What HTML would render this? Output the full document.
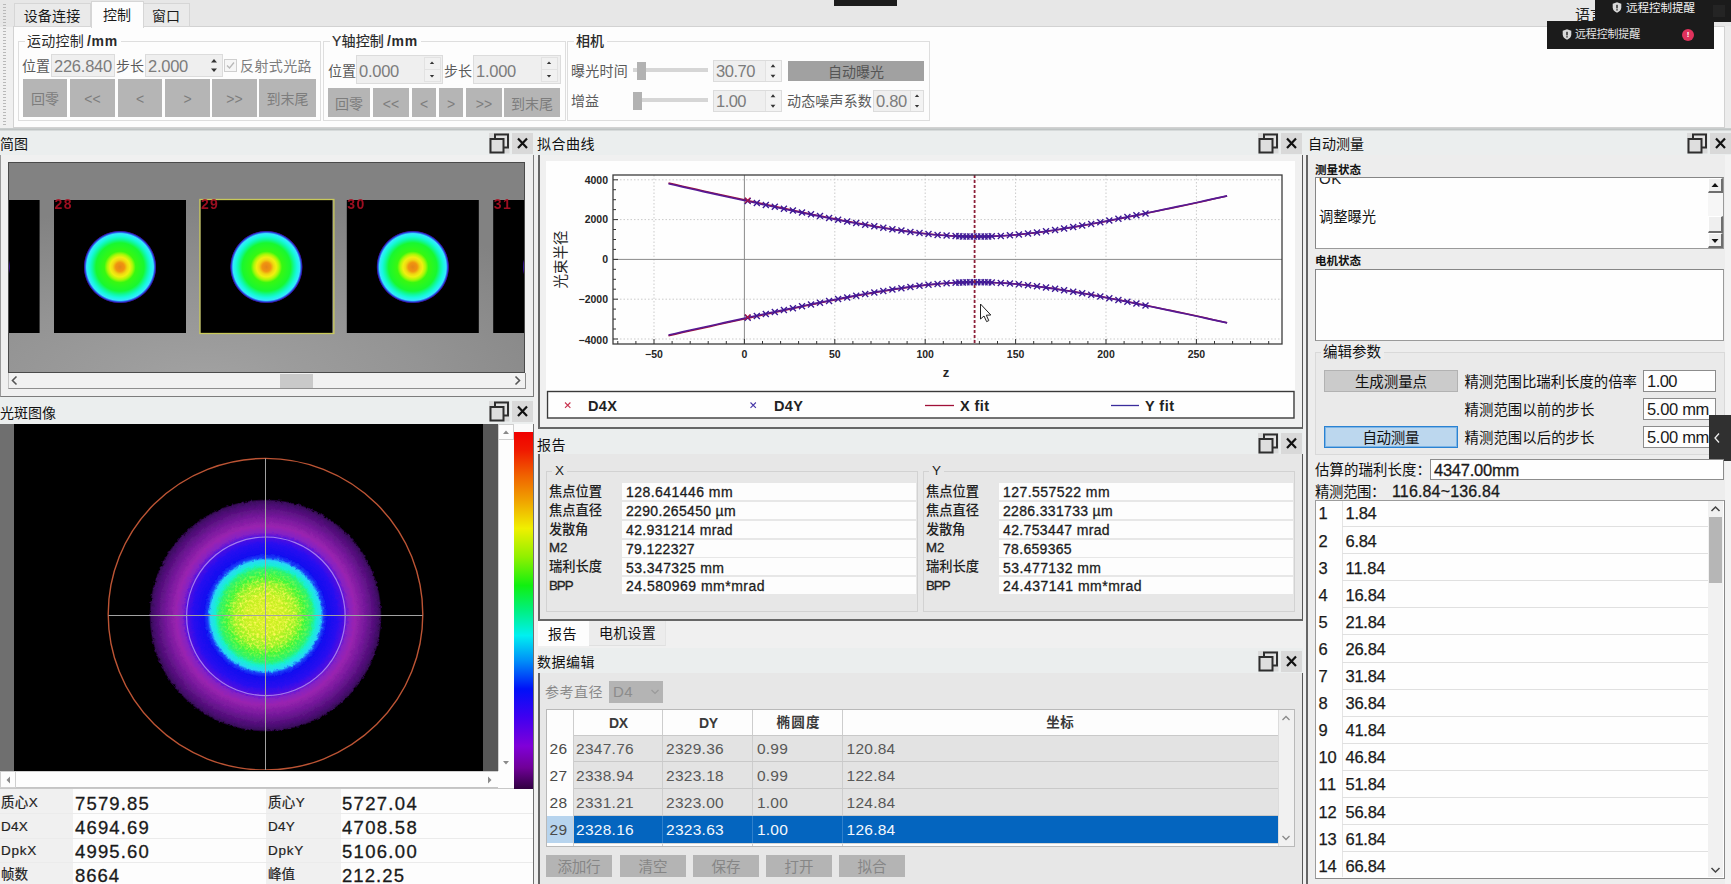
<!DOCTYPE html>
<html lang="zh-CN"><head><meta charset="utf-8"><title>光束质量分析</title>
<style>
html,body{margin:0;padding:0}
body{width:1731px;height:884px;overflow:hidden;position:relative;background:#f0f0f0;font-family:"Liberation Sans","Noto Sans CJK SC",sans-serif;font-size:14px}
div{position:absolute;box-sizing:border-box}
svg{position:absolute;overflow:hidden}
.t{position:absolute;white-space:pre;display:block}
</style></head>
<body>
<div style="left:0px;top:155px;width:534px;height:242px;background:#f0f0f0;border-left:1px solid #9a9a9a;border-right:1px solid #7c7c7c;border-bottom:1px solid #7c7c7c"></div>
<svg style="left:8px;top:162px" width="517" height="211" viewBox="0 0 517 211"><defs><radialGradient id="tg" cx="0.38" cy="1.05" r="0.85"><stop offset="0" stop-color="#a2a2a2"/><stop offset="0.5" stop-color="#949494"/><stop offset="1" stop-color="#828282"/></radialGradient><radialGradient id="sp" cx="0.5" cy="0.5" r="0.5"><stop offset="0" stop-color="#e48418"/><stop offset="0.12" stop-color="#f09410"/><stop offset="0.2" stop-color="#f0d810"/><stop offset="0.27" stop-color="#f0f010"/><stop offset="0.35" stop-color="#a8f808"/><stop offset="0.43" stop-color="#38f810"/><stop offset="0.66" stop-color="#18f830"/><stop offset="0.76" stop-color="#10f8a0"/><stop offset="0.84" stop-color="#18f8e0"/><stop offset="0.915" stop-color="#38e8ff"/><stop offset="0.955" stop-color="#2848e0"/><stop offset="0.985" stop-color="#300878"/><stop offset="1" stop-color="#000"/></radialGradient></defs><rect width="517" height="211" fill="url(#tg)"/><rect x="0.5" y="0.5" width="516" height="210" fill="none" stroke="#4a4a4a"/><rect x="-100.4" y="38" width="132" height="133" fill="#000"/><circle cx="-34.4" cy="105" r="36.5" fill="url(#sp)"/><text x="-99.9" y="47" font-size="14" fill="#ac1024" font-family="Liberation Sans,sans-serif" font-weight="700" opacity="0.9" textLength="17">27</text><rect x="46.0" y="38" width="132" height="133" fill="#000"/><circle cx="112.0" cy="105" r="36.5" fill="url(#sp)"/><text x="46.5" y="47" font-size="14" fill="#ac1024" font-family="Liberation Sans,sans-serif" font-weight="700" opacity="0.9" textLength="17">28</text><rect x="192.4" y="38" width="132" height="133" fill="#000"/><circle cx="258.4" cy="105" r="36.5" fill="url(#sp)"/><rect x="191.9" y="37.5" width="134" height="134" fill="none" stroke="#c9c95a" stroke-width="1.3"/><text x="192.9" y="47" font-size="14" fill="#ac1024" font-family="Liberation Sans,sans-serif" font-weight="700" opacity="0.9" textLength="17">29</text><rect x="338.8" y="38" width="132" height="133" fill="#000"/><circle cx="404.8" cy="105" r="36.5" fill="url(#sp)"/><text x="339.3" y="47" font-size="14" fill="#ac1024" font-family="Liberation Sans,sans-serif" font-weight="700" opacity="0.9" textLength="17">30</text><rect x="485.2" y="38" width="132" height="133" fill="#000"/><circle cx="551.2" cy="105" r="36.5" fill="url(#sp)"/><text x="485.7" y="47" font-size="14" fill="#ac1024" font-family="Liberation Sans,sans-serif" font-weight="700" opacity="0.9" textLength="17">31</text><rect x="0.5" y="0.5" width="516" height="210" fill="none" stroke="#4a4a4a"/></svg>
<div style="left:8px;top:373px;width:518px;height:16px;background:#f1f1f1;border-left:1px solid #c4c4c4;border-right:1px solid #8e8e8e;border-bottom:1px solid #8e8e8e"></div>
<div style="left:280px;top:374px;width:33px;height:14px;background:#c9c9c9;"></div>
<svg style="left:10px;top:375px" width="10" height="11"><path d="M6.5 1.5 L2.5 5.5 L6.5 9.5" stroke="#555" stroke-width="1.6" fill="none"/></svg>
<svg style="left:512px;top:375px" width="10" height="11"><path d="M3.5 1.5 L7.5 5.5 L3.5 9.5" stroke="#555" stroke-width="1.6" fill="none"/></svg>
<div style="left:0px;top:397px;width:533px;height:27px;background:#ebeeee;"></div>
<span class="t" style="top:402.5px;height:21px;line-height:21px;font-size:14px;color:#111;letter-spacing:0.00px;left:0px;">光斑图像</span>
<svg style="left:489px;top:401px" width="44" height="21"><rect x="0" y="0" width="20.5" height="20.5" fill="#dadada"/><rect x="6" y="1.5" width="13" height="13" fill="#e2e2e2" stroke="#2e2e2e" stroke-width="2"/><rect x="1.5" y="6" width="13" height="13.5" fill="#dedede" stroke="#2e2e2e" stroke-width="2"/><rect x="23" y="0" width="21" height="21" fill="#d9d9d9"/><path d="M29 5.5 L38 15 M38 5.5 L29 15" stroke="#111" stroke-width="2.2" fill="none"/></svg>
<div style="left:0px;top:424px;width:498px;height:347px;background:#000;"></div>
<div style="left:0px;top:424px;width:14px;height:347px;background:#6f6f6f;"></div>
<div style="left:483px;top:424px;width:15px;height:347px;background:#575757;"></div>
<svg style="left:14px;top:424px" width="469" height="346" viewBox="0 0 469 346"><defs><radialGradient id="bm" cx="0.5" cy="0.5" r="0.5"><stop offset="0" stop-color="#d6f020"/><stop offset="0.17" stop-color="#c4f020"/><stop offset="0.27" stop-color="#90f428"/><stop offset="0.33" stop-color="#40f838"/><stop offset="0.40" stop-color="#28f470"/><stop offset="0.435" stop-color="#18f0d0"/><stop offset="0.475" stop-color="#28d8f8"/><stop offset="0.5" stop-color="#1840f8"/><stop offset="0.53" stop-color="#1010f0"/><stop offset="0.62" stop-color="#2808f0"/><stop offset="0.68" stop-color="#5010e0"/><stop offset="0.715" stop-color="#8420c4"/><stop offset="0.77" stop-color="#9a24b0"/><stop offset="0.86" stop-color="#74189a"/><stop offset="0.96" stop-color="#480c70"/><stop offset="0.985" stop-color="#3a0a5c"/><stop offset="1" stop-color="#180228"/></radialGradient><radialGradient id="cm" cx="0.5" cy="0.5" r="0.5"><stop offset="0" stop-color="#fff"/><stop offset="0.55" stop-color="#fff"/><stop offset="1" stop-color="#000"/></radialGradient><mask id="cmk"><circle cx="251.5" cy="191.5" r="50" fill="url(#cm)"/></mask><filter id="nz" x="0" y="0" width="1" height="1"><feTurbulence type="fractalNoise" baseFrequency="0.42" numOctaves="2" seed="7"/><feColorMatrix type="matrix" values="0 0 0 0 0.97  0 0 0 0 0.94  0 0 0 0 0.1  2.6 0 0 0 -1.05"/></filter><filter id="rg" x="-0.05" y="-0.05" width="1.1" height="1.1"><feTurbulence type="fractalNoise" baseFrequency="0.3" numOctaves="2" seed="11" result="n"/><feDisplacementMap in="SourceGraphic" in2="n" scale="3.2" xChannelSelector="R" yChannelSelector="G"/></filter></defs><circle cx="251.5" cy="191.5" r="116" fill="url(#bm)" filter="url(#rg)"/><rect x="199.5" y="139.5" width="104" height="104" filter="url(#nz)" mask="url(#cmk)"/><circle cx="251.9" cy="192.3" r="79.3" fill="none" stroke="#a47cee" stroke-width="1.2"/><ellipse cx="251.5" cy="190.2" rx="157.3" ry="155.8" fill="none" stroke="#bc5434" stroke-width="1.4"/><path d="M94.5 191.5 H408.5 M251.5 34.5 V346" stroke="#a2a2a2" stroke-width="1" fill="none"/></svg>
<div style="left:498px;top:424px;width:16px;height:347px;background:#fdfdfd;border-left:1px solid #d0d0d0"></div>
<div style="left:498px;top:424px;width:16px;height:16px;background:#fdfdfd;border:1px solid #cfcfcf;"></div>
<svg style="left:501px;top:429px" width="10" height="6"><path d="M2 5 L5 1.5 L8 5Z" fill="#8a8a8a"/></svg>
<svg style="left:501px;top:760px" width="10" height="6"><path d="M2 1 L5 4.5 L8 1Z" fill="#8a8a8a"/></svg>
<div style="left:0px;top:771px;width:498px;height:17px;background:#fdfdfd;border-top:1px solid #cfcfcf;border-bottom:1px solid #c4c4c4"></div>
<div style="left:0px;top:771px;width:16px;height:17px;background:#fdfdfd;border:1px solid #cfcfcf;"></div>
<svg style="left:5px;top:775px" width="6" height="10"><path d="M5 1.5 L1.5 5 L5 8.5Z" fill="#8a8a8a"/></svg>
<svg style="left:487px;top:775px" width="6" height="10"><path d="M1 1.5 L4.5 5 L1 8.5Z" fill="#8a8a8a"/></svg>
<div style="left:514px;top:424px;width:20px;height:9px;background:#fafafa;"></div>
<div style="left:514px;top:432px;width:20px;height:357px;background:linear-gradient(#f00000 0%,#f01800 5%,#f06000 12%,#f0a000 19%,#f0f000 27%,#90f000 35%,#10f010 43%,#00f080 50%,#00f0f0 57%,#0090f8 64%,#0010f8 72%,#4000f0 80%,#8000d8 88%,#700098 94%,#300040 100%);border-right:1px solid #666"></div>
<div style="left:0px;top:789px;width:533px;height:95px;background:#fdfdfd;"></div>
<div style="left:0px;top:789px;width:73px;height:95px;background:#f0f0f0;"></div>
<div style="left:266px;top:789px;width:75px;height:95px;background:#f0f0f0;"></div>
<div style="left:0px;top:788px;width:514px;height:1px;background:#c8c8c8;"></div>
<div style="left:498px;top:771px;width:16px;height:17px;background:#fdfdfd;"></div>
<div style="left:533px;top:424px;width:1px;height:460px;background:#707070;"></div>
<div style="left:0px;top:813px;width:533px;height:1px;background:#ebebeb;"></div>
<div style="left:0px;top:838px;width:533px;height:1px;background:#ebebeb;"></div>
<div style="left:0px;top:862px;width:533px;height:1px;background:#ebebeb;"></div>
<span class="t" style="top:793.4px;height:20px;line-height:20px;font-size:13.5px;color:#222;letter-spacing:0.33px;left:1px;-webkit-text-stroke:0.2px #222;">质心X</span>
<span class="t" style="top:789.5px;height:28px;line-height:28px;font-size:18.5px;color:#1a1a1a;letter-spacing:1.16px;left:75px;-webkit-text-stroke:0.3px #1a1a1a;">7579.85</span>
<span class="t" style="top:793.4px;height:20px;line-height:20px;font-size:13.5px;color:#222;letter-spacing:0.33px;left:268px;-webkit-text-stroke:0.2px #222;">质心Y</span>
<span class="t" style="top:789.5px;height:28px;line-height:28px;font-size:18.5px;color:#1a1a1a;letter-spacing:1.30px;left:342px;-webkit-text-stroke:0.3px #1a1a1a;">5727.04</span>
<span class="t" style="top:817.4px;height:20px;line-height:20px;font-size:13.5px;color:#222;letter-spacing:0.24px;left:1px;-webkit-text-stroke:0.2px #222;">D4X</span>
<span class="t" style="top:813.5px;height:28px;line-height:28px;font-size:18.5px;color:#1a1a1a;letter-spacing:1.16px;left:75px;-webkit-text-stroke:0.3px #1a1a1a;">4694.69</span>
<span class="t" style="top:817.4px;height:20px;line-height:20px;font-size:13.5px;color:#222;letter-spacing:0.24px;left:268px;-webkit-text-stroke:0.2px #222;">D4Y</span>
<span class="t" style="top:813.5px;height:28px;line-height:28px;font-size:18.5px;color:#1a1a1a;letter-spacing:1.30px;left:342px;-webkit-text-stroke:0.3px #1a1a1a;">4708.58</span>
<span class="t" style="top:841.4px;height:20px;line-height:20px;font-size:13.5px;color:#222;letter-spacing:0.75px;left:1px;-webkit-text-stroke:0.2px #222;">DpkX</span>
<span class="t" style="top:837.5px;height:28px;line-height:28px;font-size:18.5px;color:#1a1a1a;letter-spacing:1.16px;left:75px;-webkit-text-stroke:0.3px #1a1a1a;">4995.60</span>
<span class="t" style="top:841.4px;height:20px;line-height:20px;font-size:13.5px;color:#222;letter-spacing:0.75px;left:268px;-webkit-text-stroke:0.2px #222;">DpkY</span>
<span class="t" style="top:837.5px;height:28px;line-height:28px;font-size:18.5px;color:#1a1a1a;letter-spacing:1.30px;left:342px;-webkit-text-stroke:0.3px #1a1a1a;">5106.00</span>
<span class="t" style="top:865.4px;height:20px;line-height:20px;font-size:13.5px;color:#222;letter-spacing:0.00px;left:1px;-webkit-text-stroke:0.2px #222;">帧数</span>
<span class="t" style="top:861.5px;height:28px;line-height:28px;font-size:18.5px;color:#1a1a1a;letter-spacing:0.96px;left:75px;-webkit-text-stroke:0.3px #1a1a1a;">8664</span>
<span class="t" style="top:865.4px;height:20px;line-height:20px;font-size:13.5px;color:#222;letter-spacing:0.00px;left:268px;-webkit-text-stroke:0.2px #222;">峰值</span>
<span class="t" style="top:861.5px;height:28px;line-height:28px;font-size:18.5px;color:#1a1a1a;letter-spacing:1.07px;left:342px;-webkit-text-stroke:0.3px #1a1a1a;">212.25</span>
<div style="left:538px;top:155px;width:765px;height:274px;background:#f0f0f0;border-left:2px solid #666666;border-right:1px solid #585858;border-bottom:2px solid #666666"></div>
<svg style="left:546px;top:161px" width="749" height="259" viewBox="546 161 749 259" font-family="Liberation Sans,Noto Sans CJK SC,sans-serif"><rect x="546" y="161" width="749" height="257" fill="#fefefe"/><path d="M654.0 175 V344 M834.8 175 V344 M925.2 175 V344 M1015.6 175 V344 M1106.0 175 V344 M1196.4 175 V344 M613 179.8 H1282 M613 219.6 H1282 M613 299.2 H1282 M613 339.0 H1282" stroke="#cbcbcb" stroke-width="1" stroke-dasharray="1.5 2" fill="none"/><path d="M744.4 175 V344 M613 259.4 H1282" stroke="#8a8a8a" stroke-width="1" fill="none"/><path d="M617.8 344 v-3 M635.9 344 v-3 M654.0 344 v-5 M672.1 344 v-3 M690.2 344 v-3 M708.2 344 v-3 M726.3 344 v-3 M744.4 344 v-5 M762.5 344 v-3 M780.6 344 v-3 M798.6 344 v-3 M816.7 344 v-3 M834.8 344 v-5 M852.9 344 v-3 M871.0 344 v-3 M889.0 344 v-3 M907.1 344 v-3 M925.2 344 v-5 M943.3 344 v-3 M961.4 344 v-3 M979.4 344 v-3 M997.5 344 v-3 M1015.6 344 v-5 M1033.7 344 v-3 M1051.8 344 v-3 M1069.8 344 v-3 M1087.9 344 v-3 M1106.0 344 v-5 M1124.1 344 v-3 M1142.2 344 v-3 M1160.2 344 v-3 M1178.3 344 v-3 M1196.4 344 v-5 M1214.5 344 v-3 M1232.6 344 v-3 M1250.6 344 v-3 M1268.7 344 v-3 M613 339.0 h5 M613 329.0 h3 M613 319.1 h3 M613 309.1 h3 M613 299.2 h5 M613 289.2 h3 M613 279.3 h3 M613 269.3 h3 M613 259.4 h5 M613 249.4 h3 M613 239.5 h3 M613 229.5 h3 M613 219.6 h5 M613 209.6 h3 M613 199.7 h3 M613 189.7 h3 M613 179.8 h5" stroke="#333" stroke-width="1" fill="none"/><polyline points="668.5,183.0 675.4,184.6 682.4,186.2 689.4,187.7 696.4,189.3 703.4,190.9 710.4,192.4 717.3,194.0 724.3,195.5 731.3,197.0 738.3,198.6 745.3,200.1 752.3,201.6 759.2,203.1 766.2,204.6 773.2,206.1 780.2,207.6 787.2,209.1 794.2,210.6 801.1,212.0 808.1,213.5 815.1,214.9 822.1,216.3 829.1,217.7 836.1,219.1 843.0,220.4 850.0,221.7 857.0,223.0 864.0,224.3 871.0,225.5 878.0,226.7 884.9,227.9 891.9,229.0 898.9,230.1 905.9,231.1 912.9,232.0 919.9,232.9 926.8,233.7 933.8,234.4 940.8,235.1 947.8,235.6 954.8,236.0 961.8,236.3 968.8,236.5 975.7,236.6 982.7,236.6 989.7,236.4 996.7,236.1 1003.7,235.8 1010.7,235.3 1017.6,234.7 1024.6,234.0 1031.6,233.2 1038.6,232.4 1045.6,231.4 1052.6,230.5 1059.5,229.4 1066.5,228.3 1073.5,227.2 1080.5,226.0 1087.5,224.8 1094.5,223.5 1101.4,222.2 1108.4,220.9 1115.4,219.5 1122.4,218.2 1129.4,216.8 1136.4,215.4 1143.3,214.0 1150.3,212.5 1157.3,211.1 1164.3,209.6 1171.3,208.2 1178.3,206.7 1185.2,205.2 1192.2,203.7 1199.2,202.2 1206.2,200.7 1213.2,199.1 1220.2,197.6 1227.1,196.1" fill="none" stroke="#9a1040" stroke-width="1.5"/><polyline points="668.5,183.8 675.4,185.3 682.4,186.9 689.4,188.5 696.4,190.0 703.4,191.6 710.4,193.1 717.3,194.6 724.3,196.2 731.3,197.7 738.3,199.2 745.3,200.8 752.3,202.3 759.2,203.8 766.2,205.3 773.2,206.7 780.2,208.2 787.2,209.7 794.2,211.1 801.1,212.6 808.1,214.0 815.1,215.4 822.1,216.8 829.1,218.2 836.1,219.6 843.0,220.9 850.0,222.2 857.0,223.5 864.0,224.8 871.0,226.0 878.0,227.2 884.9,228.3 891.9,229.4 898.9,230.4 905.9,231.4 912.9,232.4 919.9,233.2 926.8,234.0 933.8,234.7 940.8,235.3 947.8,235.8 954.8,236.2 961.8,236.4 968.8,236.6 975.7,236.6 982.7,236.6 989.7,236.4 996.7,236.1 1003.7,235.7 1010.7,235.2 1017.6,234.5 1024.6,233.8 1031.6,233.0 1038.6,232.2 1045.6,231.2 1052.6,230.2 1059.5,229.2 1066.5,228.1 1073.5,226.9 1080.5,225.7 1087.5,224.5 1094.5,223.2 1101.4,222.0 1108.4,220.6 1115.4,219.3 1122.4,217.9 1129.4,216.5 1136.4,215.1 1143.3,213.7 1150.3,212.3 1157.3,210.9 1164.3,209.4 1171.3,207.9 1178.3,206.4 1185.2,205.0 1192.2,203.5 1199.2,202.0 1206.2,200.4 1213.2,198.9 1220.2,197.4 1227.1,195.9" fill="none" stroke="#561a94" stroke-width="1.6"/><polyline points="668.5,335.8 675.4,334.2 682.4,332.6 689.4,331.1 696.4,329.5 703.4,327.9 710.4,326.4 717.3,324.8 724.3,323.3 731.3,321.8 738.3,320.2 745.3,318.7 752.3,317.2 759.2,315.7 766.2,314.2 773.2,312.7 780.2,311.2 787.2,309.7 794.2,308.2 801.1,306.8 808.1,305.3 815.1,303.9 822.1,302.5 829.1,301.1 836.1,299.7 843.0,298.4 850.0,297.1 857.0,295.8 864.0,294.5 871.0,293.3 878.0,292.1 884.9,290.9 891.9,289.8 898.9,288.7 905.9,287.7 912.9,286.8 919.9,285.9 926.8,285.1 933.8,284.4 940.8,283.7 947.8,283.2 954.8,282.8 961.8,282.5 968.8,282.3 975.7,282.2 982.7,282.2 989.7,282.4 996.7,282.7 1003.7,283.0 1010.7,283.5 1017.6,284.1 1024.6,284.8 1031.6,285.6 1038.6,286.4 1045.6,287.4 1052.6,288.3 1059.5,289.4 1066.5,290.5 1073.5,291.6 1080.5,292.8 1087.5,294.0 1094.5,295.3 1101.4,296.6 1108.4,297.9 1115.4,299.3 1122.4,300.6 1129.4,302.0 1136.4,303.4 1143.3,304.8 1150.3,306.3 1157.3,307.7 1164.3,309.2 1171.3,310.6 1178.3,312.1 1185.2,313.6 1192.2,315.1 1199.2,316.6 1206.2,318.1 1213.2,319.7 1220.2,321.2 1227.1,322.7" fill="none" stroke="#9a1040" stroke-width="1.5"/><polyline points="668.5,335.0 675.4,333.5 682.4,331.9 689.4,330.3 696.4,328.8 703.4,327.2 710.4,325.7 717.3,324.2 724.3,322.6 731.3,321.1 738.3,319.6 745.3,318.0 752.3,316.5 759.2,315.0 766.2,313.5 773.2,312.1 780.2,310.6 787.2,309.1 794.2,307.7 801.1,306.2 808.1,304.8 815.1,303.4 822.1,302.0 829.1,300.6 836.1,299.2 843.0,297.9 850.0,296.6 857.0,295.3 864.0,294.0 871.0,292.8 878.0,291.6 884.9,290.5 891.9,289.4 898.9,288.4 905.9,287.4 912.9,286.4 919.9,285.6 926.8,284.8 933.8,284.1 940.8,283.5 947.8,283.0 954.8,282.6 961.8,282.4 968.8,282.2 975.7,282.2 982.7,282.2 989.7,282.4 996.7,282.7 1003.7,283.1 1010.7,283.6 1017.6,284.3 1024.6,285.0 1031.6,285.8 1038.6,286.6 1045.6,287.6 1052.6,288.6 1059.5,289.6 1066.5,290.7 1073.5,291.9 1080.5,293.1 1087.5,294.3 1094.5,295.6 1101.4,296.8 1108.4,298.2 1115.4,299.5 1122.4,300.9 1129.4,302.3 1136.4,303.7 1143.3,305.1 1150.3,306.5 1157.3,307.9 1164.3,309.4 1171.3,310.9 1178.3,312.4 1185.2,313.8 1192.2,315.3 1199.2,316.8 1206.2,318.4 1213.2,319.9 1220.2,321.4 1227.1,322.9" fill="none" stroke="#561a94" stroke-width="1.6"/><path d="M744.7 198.0 l6 6 M744.7 204.0 l6 -6 M744.7 314.8 l6 6 M744.7 320.8 l6 -6 M753.8 199.9 l6 6 M753.8 205.9 l6 -6 M753.8 312.9 l6 6 M753.8 318.9 l6 -6 M762.8 201.9 l6 6 M762.8 207.9 l6 -6 M762.8 310.9 l6 6 M762.8 316.9 l6 -6 M771.8 203.8 l6 6 M771.8 209.8 l6 -6 M771.8 309.0 l6 6 M771.8 315.0 l6 -6 M780.9 205.7 l6 6 M780.9 211.7 l6 -6 M780.9 307.1 l6 6 M780.9 313.1 l6 -6 M789.9 207.6 l6 6 M789.9 213.6 l6 -6 M789.9 305.2 l6 6 M789.9 311.2 l6 -6 M799.0 209.5 l6 6 M799.0 215.5 l6 -6 M799.0 303.3 l6 6 M799.0 309.3 l6 -6 M808.0 211.3 l6 6 M808.0 217.3 l6 -6 M808.0 301.5 l6 6 M808.0 307.5 l6 -6 M817.0 213.1 l6 6 M817.0 219.1 l6 -6 M817.0 299.7 l6 6 M817.0 305.7 l6 -6 M826.1 214.9 l6 6 M826.1 220.9 l6 -6 M826.1 297.9 l6 6 M826.1 303.9 l6 -6 M835.1 216.7 l6 6 M835.1 222.7 l6 -6 M835.1 296.1 l6 6 M835.1 302.1 l6 -6 M844.2 218.4 l6 6 M844.2 224.4 l6 -6 M844.2 294.4 l6 6 M844.2 300.4 l6 -6 M853.2 220.1 l6 6 M853.2 226.1 l6 -6 M853.2 292.7 l6 6 M853.2 298.7 l6 -6 M862.2 221.8 l6 6 M862.2 227.8 l6 -6 M862.2 291.0 l6 6 M862.2 297.0 l6 -6 M871.3 223.3 l6 6 M871.3 229.3 l6 -6 M871.3 289.5 l6 6 M871.3 295.5 l6 -6 M880.3 224.8 l6 6 M880.3 230.8 l6 -6 M880.3 288.0 l6 6 M880.3 294.0 l6 -6 M889.4 226.3 l6 6 M889.4 232.3 l6 -6 M889.4 286.5 l6 6 M889.4 292.5 l6 -6 M898.4 227.6 l6 6 M898.4 233.6 l6 -6 M898.4 285.2 l6 6 M898.4 291.2 l6 -6 M907.4 228.9 l6 6 M907.4 234.9 l6 -6 M907.4 283.9 l6 6 M907.4 289.9 l6 -6 M916.5 230.0 l6 6 M916.5 236.0 l6 -6 M916.5 282.8 l6 6 M916.5 288.8 l6 -6 M925.5 231.0 l6 6 M925.5 237.0 l6 -6 M925.5 281.8 l6 6 M925.5 287.8 l6 -6 M934.6 231.9 l6 6 M934.6 237.9 l6 -6 M934.6 280.9 l6 6 M934.6 286.9 l6 -6 M943.6 232.6 l6 6 M943.6 238.6 l6 -6 M943.6 280.2 l6 6 M943.6 286.2 l6 -6 M952.6 233.1 l6 6 M952.6 239.1 l6 -6 M952.6 279.7 l6 6 M952.6 285.7 l6 -6 M956.3 233.3 l6 6 M956.3 239.3 l6 -6 M956.3 279.5 l6 6 M956.3 285.5 l6 -6 M959.9 233.4 l6 6 M959.9 239.4 l6 -6 M959.9 279.4 l6 6 M959.9 285.4 l6 -6 M963.5 233.5 l6 6 M963.5 239.5 l6 -6 M963.5 279.3 l6 6 M963.5 285.3 l6 -6 M967.1 233.6 l6 6 M967.1 239.6 l6 -6 M967.1 279.2 l6 6 M967.1 285.2 l6 -6 M970.7 233.6 l6 6 M970.7 239.6 l6 -6 M970.7 279.2 l6 6 M970.7 285.2 l6 -6 M974.3 233.6 l6 6 M974.3 239.6 l6 -6 M974.3 279.2 l6 6 M974.3 285.2 l6 -6 M978.0 233.6 l6 6 M978.0 239.6 l6 -6 M978.0 279.2 l6 6 M978.0 285.2 l6 -6 M981.6 233.5 l6 6 M981.6 239.5 l6 -6 M981.6 279.3 l6 6 M981.6 285.3 l6 -6 M985.2 233.5 l6 6 M985.2 239.5 l6 -6 M985.2 279.3 l6 6 M985.2 285.3 l6 -6 M988.8 233.3 l6 6 M988.8 239.3 l6 -6 M988.8 279.5 l6 6 M988.8 285.5 l6 -6 M997.8 232.9 l6 6 M997.8 238.9 l6 -6 M997.8 279.9 l6 6 M997.8 285.9 l6 -6 M1006.9 232.3 l6 6 M1006.9 238.3 l6 -6 M1006.9 280.5 l6 6 M1006.9 286.5 l6 -6 M1015.9 231.5 l6 6 M1015.9 237.5 l6 -6 M1015.9 281.3 l6 6 M1015.9 287.3 l6 -6 M1025.0 230.5 l6 6 M1025.0 236.5 l6 -6 M1025.0 282.3 l6 6 M1025.0 288.3 l6 -6 M1034.0 229.5 l6 6 M1034.0 235.5 l6 -6 M1034.0 283.3 l6 6 M1034.0 289.3 l6 -6 M1043.0 228.3 l6 6 M1043.0 234.3 l6 -6 M1043.0 284.5 l6 6 M1043.0 290.5 l6 -6 M1052.1 227.0 l6 6 M1052.1 233.0 l6 -6 M1052.1 285.8 l6 6 M1052.1 291.8 l6 -6 M1061.1 225.6 l6 6 M1061.1 231.6 l6 -6 M1061.1 287.2 l6 6 M1061.1 293.2 l6 -6 M1070.2 224.1 l6 6 M1070.2 230.1 l6 -6 M1070.2 288.7 l6 6 M1070.2 294.7 l6 -6 M1079.2 222.6 l6 6 M1079.2 228.6 l6 -6 M1079.2 290.2 l6 6 M1079.2 296.2 l6 -6 M1088.2 221.0 l6 6 M1088.2 227.0 l6 -6 M1088.2 291.8 l6 6 M1088.2 297.8 l6 -6 M1097.3 219.3 l6 6 M1097.3 225.3 l6 -6 M1097.3 293.5 l6 6 M1097.3 299.5 l6 -6 M1106.3 217.6 l6 6 M1106.3 223.6 l6 -6 M1106.3 295.2 l6 6 M1106.3 301.2 l6 -6 M1115.4 215.8 l6 6 M1115.4 221.8 l6 -6 M1115.4 297.0 l6 6 M1115.4 303.0 l6 -6 M1124.4 214.1 l6 6 M1124.4 220.1 l6 -6 M1124.4 298.7 l6 6 M1124.4 304.7 l6 -6 M1133.4 212.2 l6 6 M1133.4 218.2 l6 -6 M1133.4 300.6 l6 6 M1133.4 306.6 l6 -6 M1142.5 210.4 l6 6 M1142.5 216.4 l6 -6 M1142.5 302.4 l6 6 M1142.5 308.4 l6 -6" stroke="#3e1a96" stroke-width="1.35" fill="none"/><path d="M745.1 197.6 l5.2 5.2 M745.1 202.8 l5.2 -5.2" stroke="#b01840" stroke-width="1.1" fill="none"/><path d="M745.1 314.4 l5.2 5.2 M745.1 319.6 l5.2 -5.2" stroke="#b01840" stroke-width="1.1" fill="none"/><path d="M974.6 175 V344" stroke="#8c2038" stroke-width="1.8" stroke-dasharray="3 2" fill="none"/><rect x="613" y="175" width="669" height="169" fill="none" stroke="#3c3c3c" stroke-width="1.3"/><text x="608" y="183.6" font-size="10.5" font-weight="700" fill="#262626" text-anchor="end">4000</text><text x="608" y="223.2" font-size="10.5" font-weight="700" fill="#262626" text-anchor="end">2000</text><text x="608" y="263.0" font-size="10.5" font-weight="700" fill="#262626" text-anchor="end">0</text><text x="608" y="302.6" font-size="10.5" font-weight="700" fill="#262626" text-anchor="end">−2000</text><text x="608" y="343.6" font-size="10.5" font-weight="700" fill="#262626" text-anchor="end">−4000</text><text x="654.0" y="357.6" font-size="10.5" font-weight="700" fill="#262626" text-anchor="middle">−50</text><text x="744.4" y="357.6" font-size="10.5" font-weight="700" fill="#262626" text-anchor="middle">0</text><text x="834.8" y="357.6" font-size="10.5" font-weight="700" fill="#262626" text-anchor="middle">50</text><text x="925.2" y="357.6" font-size="10.5" font-weight="700" fill="#262626" text-anchor="middle">100</text><text x="1015.6" y="357.6" font-size="10.5" font-weight="700" fill="#262626" text-anchor="middle">150</text><text x="1106.0" y="357.6" font-size="10.5" font-weight="700" fill="#262626" text-anchor="middle">200</text><text x="1196.4" y="357.6" font-size="10.5" font-weight="700" fill="#262626" text-anchor="middle">250</text><text x="946" y="377" font-size="13" font-weight="700" fill="#262626" text-anchor="middle">z</text><text transform="translate(566,259.5) rotate(-90)" font-size="14.5" fill="#262626" text-anchor="middle" textLength="58">光束半径</text><path d="M980.5 304 L980.5 319 L984 316 L986.6 321.6 L988.8 320.6 L986.3 315.2 L990.8 315 Z" fill="#fff" stroke="#222" stroke-width="1"/><rect x="547.5" y="391.5" width="746.5" height="26.5" fill="#fefefe" stroke="#3a3a3a" stroke-width="1.4"/><path d="M565 402.5 l5.4 5.4 M565 407.9 l5.4 -5.4" stroke="#c8324e" stroke-width="1.1" fill="none"/><path d="M750.5 402.5 l5.4 5.4 M750.5 407.9 l5.4 -5.4" stroke="#4838a8" stroke-width="1.1" fill="none"/><path d="M925 405.5 H954" stroke="#a01038" stroke-width="1.3"/><path d="M1111 405.5 H1139" stroke="#3a2c9c" stroke-width="1.3"/><text x="588" y="410.6" font-size="14.5" font-weight="700" fill="#222" textLength="29">D4X</text><text x="774" y="410.6" font-size="14.5" font-weight="700" fill="#222" textLength="29">D4Y</text><text x="960" y="410.6" font-size="14.5" font-weight="700" fill="#222" textLength="29">X fit</text><text x="1145" y="410.6" font-size="14.5" font-weight="700" fill="#222" textLength="29">Y fit</text></svg>
<div style="left:538px;top:429px;width:765px;height:26px;background:#ebeeee;"></div>
<span class="t" style="top:434.5px;height:21px;line-height:21px;font-size:14px;color:#111;letter-spacing:0.50px;left:537px;">报告</span>
<svg style="left:1258px;top:433px" width="44" height="21"><rect x="0" y="0" width="20.5" height="20.5" fill="#dadada"/><rect x="6" y="1.5" width="13" height="13" fill="#e2e2e2" stroke="#2e2e2e" stroke-width="2"/><rect x="1.5" y="6" width="13" height="13.5" fill="#dedede" stroke="#2e2e2e" stroke-width="2"/><rect x="23" y="0" width="21" height="21" fill="#d9d9d9"/><path d="M29 5.5 L38 15 M38 5.5 L29 15" stroke="#111" stroke-width="2.2" fill="none"/></svg>
<div style="left:538px;top:454px;width:765px;height:167px;background:#e7e7e7;border-left:2px solid #666666;border-right:1px solid #585858;border-bottom:2px solid #666666"></div>
<div style="left:546px;top:471px;width:372px;height:141px;border:1px solid #d2d2d2;"></div>
<div style="left:552px;top:464px;width:15px;height:14px;background:#e7e7e7;"></div>
<span class="t" style="top:461.0px;height:20px;line-height:20px;font-size:13.5px;color:#222;font-weight:500;left:555px;">X</span>
<div style="left:622px;top:483px;width:294px;height:17px;background:#fdfdfd;"></div>
<span class="t" style="top:482.0px;height:20px;line-height:20px;font-size:13.3px;color:#222;font-weight:500;letter-spacing:-0.05px;left:549px;">焦点位置</span>
<span class="t" style="top:482.3px;height:21px;line-height:21px;font-size:14px;color:#1c1c1c;letter-spacing:0.45px;left:626px;-webkit-text-stroke:0.3px #1c1c1c;">128.641446 mm</span>
<div style="left:622px;top:502px;width:294px;height:17px;background:#fdfdfd;"></div>
<span class="t" style="top:500.8px;height:20px;line-height:20px;font-size:13.3px;color:#222;font-weight:500;letter-spacing:-0.05px;left:549px;">焦点直径</span>
<span class="t" style="top:501.1px;height:21px;line-height:21px;font-size:14px;color:#1c1c1c;letter-spacing:0.33px;left:626px;-webkit-text-stroke:0.3px #1c1c1c;">2290.265450 µm</span>
<div style="left:622px;top:521px;width:294px;height:17px;background:#fdfdfd;"></div>
<span class="t" style="top:519.6px;height:20px;line-height:20px;font-size:13.3px;color:#222;font-weight:500;letter-spacing:-0.30px;left:549px;">发散角</span>
<span class="t" style="top:519.9px;height:21px;line-height:21px;font-size:14px;color:#1c1c1c;letter-spacing:0.36px;left:626px;-webkit-text-stroke:0.3px #1c1c1c;">42.931214 mrad</span>
<div style="left:622px;top:540px;width:294px;height:17px;background:#fdfdfd;"></div>
<span class="t" style="top:538.4px;height:20px;line-height:20px;font-size:13.3px;color:#222;font-weight:500;letter-spacing:0.01px;left:549px;-webkit-text-stroke:0.3px #222;">M2</span>
<span class="t" style="top:538.7px;height:21px;line-height:21px;font-size:14px;color:#1c1c1c;letter-spacing:0.31px;left:626px;-webkit-text-stroke:0.3px #1c1c1c;">79.122327</span>
<div style="left:622px;top:558px;width:294px;height:17px;background:#fdfdfd;"></div>
<span class="t" style="top:557.2px;height:20px;line-height:20px;font-size:13.3px;color:#222;font-weight:500;letter-spacing:-0.05px;left:549px;">瑞利长度</span>
<span class="t" style="top:557.5px;height:21px;line-height:21px;font-size:14px;color:#1c1c1c;letter-spacing:0.42px;left:626px;-webkit-text-stroke:0.3px #1c1c1c;">53.347325 mm</span>
<div style="left:622px;top:577px;width:294px;height:17px;background:#fdfdfd;"></div>
<span class="t" style="top:576.0px;height:20px;line-height:20px;font-size:13.3px;color:#222;font-weight:500;letter-spacing:-1.04px;left:549px;-webkit-text-stroke:0.3px #222;">BPP</span>
<span class="t" style="top:576.3px;height:21px;line-height:21px;font-size:14px;color:#1c1c1c;letter-spacing:0.49px;left:626px;-webkit-text-stroke:0.3px #1c1c1c;">24.580969 mm*mrad</span>
<div style="left:923px;top:471px;width:372px;height:141px;border:1px solid #d2d2d2;"></div>
<div style="left:929px;top:464px;width:15px;height:14px;background:#e7e7e7;"></div>
<span class="t" style="top:461.0px;height:20px;line-height:20px;font-size:13.5px;color:#222;font-weight:500;left:932px;">Y</span>
<div style="left:999px;top:483px;width:294px;height:17px;background:#fdfdfd;"></div>
<span class="t" style="top:482.0px;height:20px;line-height:20px;font-size:13.3px;color:#222;font-weight:500;letter-spacing:-0.05px;left:926px;">焦点位置</span>
<span class="t" style="top:482.3px;height:21px;line-height:21px;font-size:14px;color:#1c1c1c;letter-spacing:0.45px;left:1003px;-webkit-text-stroke:0.3px #1c1c1c;">127.557522 mm</span>
<div style="left:999px;top:502px;width:294px;height:17px;background:#fdfdfd;"></div>
<span class="t" style="top:500.8px;height:20px;line-height:20px;font-size:13.3px;color:#222;font-weight:500;letter-spacing:-0.05px;left:926px;">焦点直径</span>
<span class="t" style="top:501.1px;height:21px;line-height:21px;font-size:14px;color:#1c1c1c;letter-spacing:0.33px;left:1003px;-webkit-text-stroke:0.3px #1c1c1c;">2286.331733 µm</span>
<div style="left:999px;top:521px;width:294px;height:17px;background:#fdfdfd;"></div>
<span class="t" style="top:519.6px;height:20px;line-height:20px;font-size:13.3px;color:#222;font-weight:500;letter-spacing:-0.30px;left:926px;">发散角</span>
<span class="t" style="top:519.9px;height:21px;line-height:21px;font-size:14px;color:#1c1c1c;letter-spacing:0.36px;left:1003px;-webkit-text-stroke:0.3px #1c1c1c;">42.753447 mrad</span>
<div style="left:999px;top:540px;width:294px;height:17px;background:#fdfdfd;"></div>
<span class="t" style="top:538.4px;height:20px;line-height:20px;font-size:13.3px;color:#222;font-weight:500;letter-spacing:0.01px;left:926px;-webkit-text-stroke:0.3px #222;">M2</span>
<span class="t" style="top:538.7px;height:21px;line-height:21px;font-size:14px;color:#1c1c1c;letter-spacing:0.31px;left:1003px;-webkit-text-stroke:0.3px #1c1c1c;">78.659365</span>
<div style="left:999px;top:558px;width:294px;height:17px;background:#fdfdfd;"></div>
<span class="t" style="top:557.2px;height:20px;line-height:20px;font-size:13.3px;color:#222;font-weight:500;letter-spacing:-0.05px;left:926px;">瑞利长度</span>
<span class="t" style="top:557.5px;height:21px;line-height:21px;font-size:14px;color:#1c1c1c;letter-spacing:0.42px;left:1003px;-webkit-text-stroke:0.3px #1c1c1c;">53.477132 mm</span>
<div style="left:999px;top:577px;width:294px;height:17px;background:#fdfdfd;"></div>
<span class="t" style="top:576.0px;height:20px;line-height:20px;font-size:13.3px;color:#222;font-weight:500;letter-spacing:-1.04px;left:926px;-webkit-text-stroke:0.3px #222;">BPP</span>
<span class="t" style="top:576.3px;height:21px;line-height:21px;font-size:14px;color:#1c1c1c;letter-spacing:0.49px;left:1003px;-webkit-text-stroke:0.3px #1c1c1c;">24.437141 mm*mrad</span>
<div style="left:538px;top:621px;width:51px;height:25px;background:#fdfdfd;"></div>
<div style="left:589px;top:621px;width:77px;height:25px;background:#ececec;border-bottom:1px solid #e0e0e0;border-right:1px solid #e4e4e4"></div>
<span class="t" style="top:623.5px;height:21px;line-height:21px;font-size:14px;color:#111;letter-spacing:0.50px;left:548px;">报告</span>
<span class="t" style="top:622.5px;height:21px;line-height:21px;font-size:14px;color:#111;letter-spacing:0.25px;left:599px;">电机设置</span>
<div style="left:538px;top:648px;width:765px;height:27px;background:#ebeeee;"></div>
<span class="t" style="top:651.5px;height:21px;line-height:21px;font-size:14px;color:#111;letter-spacing:0.50px;left:537px;">数据编辑</span>
<svg style="left:1258px;top:651px" width="44" height="21"><rect x="0" y="0" width="20.5" height="20.5" fill="#dadada"/><rect x="6" y="1.5" width="13" height="13" fill="#e2e2e2" stroke="#2e2e2e" stroke-width="2"/><rect x="1.5" y="6" width="13" height="13.5" fill="#dedede" stroke="#2e2e2e" stroke-width="2"/><rect x="23" y="0" width="21" height="21" fill="#d9d9d9"/><path d="M29 5.5 L38 15 M38 5.5 L29 15" stroke="#111" stroke-width="2.2" fill="none"/></svg>
<div style="left:538px;top:673px;width:765px;height:213px;background:#e7e7e7;border-left:2px solid #666666;border-right:1px solid #585858"></div>
<span class="t" style="top:681.5px;height:21px;line-height:21px;font-size:14px;color:#8a8a8a;letter-spacing:0.50px;left:545px;">参考直径</span>
<div style="left:609px;top:681px;width:54px;height:22px;background:#b4b4b4;"></div>
<span class="t" style="top:681.0px;height:22px;line-height:22px;font-size:15px;color:#8c8c8c;letter-spacing:0.41px;left:613px;">D4</span>
<svg style="left:650px;top:688px" width="10" height="8"><path d="M1.5 2 L5 5.5 L8.5 2" stroke="#9a9a9a" stroke-width="1.2" fill="none"/></svg>
<div style="left:546px;top:709px;width:749px;height:138px;background:#fdfdfd;border:1px solid #b9b9b9;"></div>
<div style="left:574px;top:736px;width:704px;height:80px;background:#e3e3e3;"></div>
<div style="left:574px;top:816px;width:704px;height:27px;background:#0465bf;"></div>
<div style="left:547px;top:816px;width:27px;height:27px;background:#b7d4ee;"></div>
<div style="left:573px;top:710px;width:1px;height:136px;background:#cdcdcd;"></div>
<div style="left:662px;top:710px;width:1px;height:136px;background:#cdcdcd;"></div>
<div style="left:752px;top:710px;width:1px;height:136px;background:#cdcdcd;"></div>
<div style="left:842px;top:710px;width:1px;height:136px;background:#cdcdcd;"></div>
<div style="left:662px;top:816px;width:1px;height:27px;background:#2f80cc;"></div>
<div style="left:752px;top:816px;width:1px;height:27px;background:#2f80cc;"></div>
<div style="left:842px;top:816px;width:1px;height:27px;background:#2f80cc;"></div>
<div style="left:574px;top:735px;width:704px;height:1px;background:#c9c9c9;"></div>
<div style="left:574px;top:761px;width:704px;height:1px;background:#c9c9c9;"></div>
<div style="left:574px;top:788px;width:704px;height:1px;background:#c9c9c9;"></div>
<div style="left:574px;top:815px;width:704px;height:1px;background:#c9c9c9;"></div>
<div style="left:574px;top:843px;width:704px;height:1px;background:#d5d5d5;"></div>
<div style="left:1278px;top:710px;width:16px;height:136px;background:#f1f1f1;border-left:1px solid #dcdcdc"></div>
<svg style="left:1281px;top:714px" width="10" height="8"><path d="M1.5 6 L5 2.5 L8.5 6" stroke="#8a8a8a" stroke-width="1.3" fill="none"/></svg>
<svg style="left:1281px;top:834px" width="10" height="8"><path d="M1.5 2 L5 5.5 L8.5 2" stroke="#8a8a8a" stroke-width="1.3" fill="none"/></svg>
<span class="t" style="top:712.5px;height:21px;line-height:21px;font-size:14px;color:#3a3a3a;font-weight:700;letter-spacing:-0.23px;left:318.5px;width:600px;text-align:center;text-indent:-0.23px;">DX</span>
<span class="t" style="top:712.5px;height:21px;line-height:21px;font-size:14px;color:#3a3a3a;font-weight:700;letter-spacing:-0.23px;left:408.5px;width:600px;text-align:center;text-indent:-0.23px;">DY</span>
<span class="t" style="top:713.0px;height:20px;line-height:20px;font-size:13.5px;color:#3a3a3a;font-weight:700;letter-spacing:1.17px;left:498px;width:600px;text-align:center;text-indent:1.17px;">椭圆度</span>
<span class="t" style="top:713.0px;height:20px;line-height:20px;font-size:13.5px;color:#3a3a3a;font-weight:700;letter-spacing:0.50px;left:760px;width:600px;text-align:center;text-indent:0.50px;">坐标</span>
<span class="t" style="top:737.3px;height:23px;line-height:23px;font-size:15.5px;color:#4a4a4a;letter-spacing:0.38px;left:549.5px;">26</span>
<span class="t" style="top:737.3px;height:23px;line-height:23px;font-size:15.5px;color:#585858;letter-spacing:0.28px;left:576px;">2347.76</span>
<span class="t" style="top:737.3px;height:23px;line-height:23px;font-size:15.5px;color:#585858;letter-spacing:0.28px;left:666px;">2329.36</span>
<span class="t" style="top:737.3px;height:23px;line-height:23px;font-size:15.5px;color:#585858;letter-spacing:0.21px;left:757px;">0.99</span>
<span class="t" style="top:737.3px;height:23px;line-height:23px;font-size:15.5px;color:#585858;letter-spacing:0.26px;left:846.5px;">120.84</span>
<span class="t" style="top:764.3px;height:23px;line-height:23px;font-size:15.5px;color:#4a4a4a;letter-spacing:0.38px;left:549.5px;">27</span>
<span class="t" style="top:764.3px;height:23px;line-height:23px;font-size:15.5px;color:#585858;letter-spacing:0.28px;left:576px;">2338.94</span>
<span class="t" style="top:764.3px;height:23px;line-height:23px;font-size:15.5px;color:#585858;letter-spacing:0.28px;left:666px;">2323.18</span>
<span class="t" style="top:764.3px;height:23px;line-height:23px;font-size:15.5px;color:#585858;letter-spacing:0.21px;left:757px;">0.99</span>
<span class="t" style="top:764.3px;height:23px;line-height:23px;font-size:15.5px;color:#585858;letter-spacing:0.26px;left:846.5px;">122.84</span>
<span class="t" style="top:791.3px;height:23px;line-height:23px;font-size:15.5px;color:#4a4a4a;letter-spacing:0.38px;left:549.5px;">28</span>
<span class="t" style="top:791.3px;height:23px;line-height:23px;font-size:15.5px;color:#585858;letter-spacing:0.28px;left:576px;">2331.21</span>
<span class="t" style="top:791.3px;height:23px;line-height:23px;font-size:15.5px;color:#585858;letter-spacing:0.28px;left:666px;">2323.00</span>
<span class="t" style="top:791.3px;height:23px;line-height:23px;font-size:15.5px;color:#585858;letter-spacing:0.21px;left:757px;">1.00</span>
<span class="t" style="top:791.3px;height:23px;line-height:23px;font-size:15.5px;color:#585858;letter-spacing:0.26px;left:846.5px;">124.84</span>
<span class="t" style="top:818.3px;height:23px;line-height:23px;font-size:15.5px;color:#4a4a4a;letter-spacing:0.38px;left:549.5px;">29</span>
<span class="t" style="top:818.3px;height:23px;line-height:23px;font-size:15.5px;color:#f4f8fc;letter-spacing:0.28px;left:576px;">2328.16</span>
<span class="t" style="top:818.3px;height:23px;line-height:23px;font-size:15.5px;color:#f4f8fc;letter-spacing:0.28px;left:666px;">2323.63</span>
<span class="t" style="top:818.3px;height:23px;line-height:23px;font-size:15.5px;color:#f4f8fc;letter-spacing:0.21px;left:757px;">1.00</span>
<span class="t" style="top:818.3px;height:23px;line-height:23px;font-size:15.5px;color:#f4f8fc;letter-spacing:0.26px;left:846.5px;">126.84</span>
<div style="left:546px;top:855px;width:66px;height:22px;background:#b4b4b4;"></div>
<span class="t" style="top:856.0px;height:22px;line-height:22px;font-size:14.5px;color:#868686;letter-spacing:-0.17px;left:279px;width:600px;text-align:center;text-indent:-0.17px;">添加行</span>
<div style="left:620px;top:855px;width:66px;height:22px;background:#b4b4b4;"></div>
<span class="t" style="top:856.0px;height:22px;line-height:22px;font-size:14.5px;color:#868686;letter-spacing:0.00px;left:353px;width:600px;text-align:center;">清空</span>
<div style="left:693px;top:855px;width:66px;height:22px;background:#b4b4b4;"></div>
<span class="t" style="top:856.0px;height:22px;line-height:22px;font-size:14.5px;color:#868686;letter-spacing:0.00px;left:426px;width:600px;text-align:center;">保存</span>
<div style="left:766px;top:855px;width:66px;height:22px;background:#b4b4b4;"></div>
<span class="t" style="top:856.0px;height:22px;line-height:22px;font-size:14.5px;color:#868686;letter-spacing:0.00px;left:499px;width:600px;text-align:center;">打开</span>
<div style="left:839px;top:855px;width:66px;height:22px;background:#b4b4b4;"></div>
<span class="t" style="top:856.0px;height:22px;line-height:22px;font-size:14.5px;color:#868686;letter-spacing:0.00px;left:572px;width:600px;text-align:center;">拟合</span>
<div style="left:0px;top:0px;width:1731px;height:27px;background:#e7e7e7;"></div>
<div style="left:834px;top:0px;width:63px;height:6px;background:#1d1d1d;"></div>
<div style="left:3px;top:4px;width:3px;height:122px;background:repeating-linear-gradient(#b9b9b9 0 1px,rgba(0,0,0,0) 1px 3px)"></div>
<div style="left:13px;top:26px;width:1712px;height:102px;background:#fdfdfd;border:1px solid #d2d2d2;"></div>
<div style="left:1725px;top:26px;width:6px;height:102px;background:#ececec;"></div>
<div style="left:14px;top:3px;width:77px;height:24px;background:#eaeaea;border:1px solid #d6d6d6;"></div>
<div style="left:143px;top:3px;width:47px;height:24px;background:#eaeaea;border:1px solid #d6d6d6;"></div>
<div style="left:91px;top:1px;width:53px;height:27px;background:#fdfdfd;border:1px solid #d6d6d6;border-bottom:none"></div>
<span class="t" style="top:5.5px;height:21px;line-height:21px;font-size:14px;color:#1a1a1a;letter-spacing:0.25px;left:-248px;width:600px;text-align:center;text-indent:0.25px;">设备连接</span>
<span class="t" style="top:4.5px;height:21px;line-height:21px;font-size:14px;color:#1a1a1a;letter-spacing:0.00px;left:-183px;width:600px;text-align:center;">控制</span>
<span class="t" style="top:5.5px;height:21px;line-height:21px;font-size:14px;color:#1a1a1a;letter-spacing:0.00px;left:-134px;width:600px;text-align:center;">窗口</span>
<div style="left:0px;top:128px;width:1731px;height:1px;background:#c9cdcd;"></div>
<div style="left:0px;top:129px;width:1731px;height:1px;background:#c0c4c4;"></div>
<div style="left:0px;top:130px;width:1731px;height:1px;background:#d6dada;"></div>
<div style="left:0px;top:131px;width:1731px;height:24px;background:#ebeeee;"></div>
<div style="left:18px;top:41px;width:303px;height:80px;border:1px solid #dedede;"></div>
<div style="left:25px;top:34px;width:96px;height:14px;background:#fdfdfd;"></div>
<span class="t" style="top:30.5px;height:21px;line-height:21px;font-size:14px;color:#2a2a2a;letter-spacing:0.25px;left:27px;">运动控制</span>
<span class="t" style="top:30.5px;height:21px;line-height:21px;font-size:14px;color:#2a2a2a;font-weight:700;letter-spacing:0.73px;left:87px;">/mm</span>
<span class="t" style="top:55.5px;height:21px;line-height:21px;font-size:14px;color:#5a5a5a;letter-spacing:0.00px;left:22px;">位置</span>
<div style="left:51px;top:54px;width:64px;height:23px;background:#efefef;border:1px solid #dcdcdc;"></div>
<span class="t" style="top:54.0px;height:25px;line-height:25px;font-size:16.5px;color:#7c7c7c;letter-spacing:-0.24px;left:54px;">226.840</span>
<span class="t" style="top:55.5px;height:21px;line-height:21px;font-size:14px;color:#5a5a5a;letter-spacing:0.00px;left:116px;">步长</span>
<div style="left:145px;top:54px;width:78px;height:23px;background:#efefef;border:1px solid #dcdcdc;"></div>
<span class="t" style="top:54.0px;height:25px;line-height:25px;font-size:16.5px;color:#7c7c7c;letter-spacing:-0.26px;left:148px;">2.000</span>
<svg style="left:209px;top:57px" width="10" height="17"><path d="M2 5.5 L5 2.0 L8 5.5Z" fill="#333"/><path d="M2 11.5 L5 15.0 L8 11.5Z" fill="#333"/></svg>
<div style="left:224px;top:59px;width:13px;height:13px;background:#f6f6f6;border:1px solid #cfcfcf;"></div>
<svg style="left:225px;top:60px" width="11" height="11"><path d="M2 5.5 L4.5 8 L9 2.5" stroke="#b8b8b8" stroke-width="1.3" fill="none"/></svg>
<span class="t" style="top:55.5px;height:21px;line-height:21px;font-size:14px;color:#7c7c7c;letter-spacing:0.40px;left:240px;">反射式光路</span>
<div style="left:23px;top:79px;width:44px;height:38px;background:#b5b5b5;"></div>
<span class="t" style="top:88.5px;height:21px;line-height:21px;font-size:14px;color:#7d7d7d;left:-255.0px;width:600px;text-align:center;">回零</span>
<div style="left:70px;top:79px;width:45px;height:38px;background:#b5b5b5;"></div>
<span class="t" style="top:88.5px;height:21px;line-height:21px;font-size:14px;color:#7d7d7d;left:-207.5px;width:600px;text-align:center;">&lt;&lt;</span>
<div style="left:118px;top:79px;width:44px;height:38px;background:#b5b5b5;"></div>
<span class="t" style="top:88.5px;height:21px;line-height:21px;font-size:14px;color:#7d7d7d;left:-160.0px;width:600px;text-align:center;">&lt;</span>
<div style="left:165px;top:79px;width:45px;height:38px;background:#b5b5b5;"></div>
<span class="t" style="top:88.5px;height:21px;line-height:21px;font-size:14px;color:#7d7d7d;left:-112.5px;width:600px;text-align:center;">&gt;</span>
<div style="left:212px;top:79px;width:45px;height:38px;background:#b5b5b5;"></div>
<span class="t" style="top:88.5px;height:21px;line-height:21px;font-size:14px;color:#7d7d7d;left:-65.5px;width:600px;text-align:center;">&gt;&gt;</span>
<div style="left:259px;top:79px;width:57px;height:38px;background:#b5b5b5;"></div>
<span class="t" style="top:88.5px;height:21px;line-height:21px;font-size:14px;color:#7d7d7d;left:-12.5px;width:600px;text-align:center;">到末尾</span>
<div style="left:323px;top:41px;width:243px;height:80px;border:1px solid #dedede;"></div>
<div style="left:330px;top:34px;width:91px;height:14px;background:#fdfdfd;"></div>
<span class="t" style="top:30.5px;height:21px;line-height:21px;font-size:14px;color:#2a2a2a;letter-spacing:0.16px;left:332px;-webkit-text-stroke:0.2px #2a2a2a;">Y轴控制</span>
<span class="t" style="top:30.5px;height:21px;line-height:21px;font-size:14px;color:#2a2a2a;font-weight:700;letter-spacing:0.73px;left:387px;">/mm</span>
<span class="t" style="top:60.5px;height:21px;line-height:21px;font-size:14px;color:#5a5a5a;letter-spacing:0.00px;left:328px;">位置</span>
<div style="left:356px;top:55px;width:87px;height:29px;background:#efefef;border:1px solid #dcdcdc;"></div>
<span class="t" style="top:59.0px;height:25px;line-height:25px;font-size:16.5px;color:#7c7c7c;letter-spacing:-0.26px;left:359px;">0.000</span>
<div style="left:424px;top:57px;width:17px;height:25px;background:#f1f1f1;border:1px solid #e2e2e2;"></div>
<div style="left:424px;top:69px;width:17px;height:1px;background:#e2e2e2;"></div>
<svg style="left:427px;top:59px" width="10" height="21"><path d="M2.8 5.1 L5 2.4 L7.2 5.1Z" fill="#333"/><path d="M2.8 15.9 L5 18.6 L7.2 15.9Z" fill="#333"/></svg>
<span class="t" style="top:60.5px;height:21px;line-height:21px;font-size:14px;color:#5a5a5a;letter-spacing:0.00px;left:444px;">步长</span>
<div style="left:473px;top:55px;width:88px;height:29px;background:#efefef;border:1px solid #dcdcdc;"></div>
<span class="t" style="top:59.0px;height:25px;line-height:25px;font-size:16.5px;color:#7c7c7c;letter-spacing:-0.26px;left:476px;">1.000</span>
<div style="left:541px;top:57px;width:17px;height:25px;background:#f1f1f1;border:1px solid #e2e2e2;"></div>
<div style="left:541px;top:69px;width:17px;height:1px;background:#e2e2e2;"></div>
<svg style="left:544px;top:59px" width="10" height="21"><path d="M2.8 5.1 L5 2.4 L7.2 5.1Z" fill="#333"/><path d="M2.8 15.9 L5 18.6 L7.2 15.9Z" fill="#333"/></svg>
<div style="left:328px;top:88px;width:42px;height:29px;background:#b5b5b5;"></div>
<span class="t" style="top:93.5px;height:21px;line-height:21px;font-size:14px;color:#7d7d7d;left:49.0px;width:600px;text-align:center;">回零</span>
<div style="left:373px;top:88px;width:36px;height:29px;background:#b5b5b5;"></div>
<span class="t" style="top:93.5px;height:21px;line-height:21px;font-size:14px;color:#7d7d7d;left:91.0px;width:600px;text-align:center;">&lt;&lt;</span>
<div style="left:412px;top:88px;width:24px;height:29px;background:#b5b5b5;"></div>
<span class="t" style="top:93.5px;height:21px;line-height:21px;font-size:14px;color:#7d7d7d;left:124.0px;width:600px;text-align:center;">&lt;</span>
<div style="left:439px;top:88px;width:24px;height:29px;background:#b5b5b5;"></div>
<span class="t" style="top:93.5px;height:21px;line-height:21px;font-size:14px;color:#7d7d7d;left:151.0px;width:600px;text-align:center;">&gt;</span>
<div style="left:466px;top:88px;width:36px;height:29px;background:#b5b5b5;"></div>
<span class="t" style="top:93.5px;height:21px;line-height:21px;font-size:14px;color:#7d7d7d;left:184.0px;width:600px;text-align:center;">&gt;&gt;</span>
<div style="left:504px;top:88px;width:56px;height:29px;background:#b5b5b5;"></div>
<span class="t" style="top:93.5px;height:21px;line-height:21px;font-size:14px;color:#7d7d7d;left:232.0px;width:600px;text-align:center;">到末尾</span>
<div style="left:567px;top:41px;width:363px;height:80px;border:1px solid #dedede;"></div>
<div style="left:574px;top:34px;width:33px;height:14px;background:#fdfdfd;"></div>
<span class="t" style="top:30.5px;height:21px;line-height:21px;font-size:14px;color:#2a2a2a;font-weight:500;letter-spacing:0.00px;left:576px;">相机</span>
<span class="t" style="top:60.5px;height:21px;line-height:21px;font-size:14px;color:#5a5a5a;letter-spacing:0.25px;left:571px;">曝光时间</span>
<span class="t" style="top:90.5px;height:21px;line-height:21px;font-size:14px;color:#5a5a5a;letter-spacing:0.00px;left:571px;">增益</span>
<div style="left:633px;top:68px;width:75px;height:4px;background:#d6d6d6;"></div>
<div style="left:637px;top:62px;width:9px;height:18px;background:#b2b2b2;"></div>
<div style="left:633px;top:98px;width:75px;height:4px;background:#d6d6d6;"></div>
<div style="left:633px;top:92px;width:9px;height:18px;background:#b2b2b2;"></div>
<div style="left:713px;top:60px;width:69px;height:22px;background:#efefef;border:1px solid #dcdcdc;"></div>
<span class="t" style="top:59.0px;height:25px;line-height:25px;font-size:16.5px;color:#7c7c7c;letter-spacing:-0.46px;left:716px;">30.70</span>
<div style="left:765px;top:61px;width:16px;height:20px;background:#f3f3f3;border-left:1px solid #e2e2e2"></div>
<svg style="left:768px;top:62px" width="10" height="18"><path d="M2.6 5.2 L5 2.3 L7.4 5.2Z" fill="#333"/><path d="M2.6 12.8 L5 15.7 L7.4 12.8Z" fill="#333"/></svg>
<div style="left:713px;top:90px;width:69px;height:22px;background:#efefef;border:1px solid #dcdcdc;"></div>
<span class="t" style="top:89.0px;height:25px;line-height:25px;font-size:16.5px;color:#7c7c7c;letter-spacing:-0.53px;left:716px;">1.00</span>
<div style="left:765px;top:91px;width:16px;height:20px;background:#f3f3f3;border-left:1px solid #e2e2e2"></div>
<svg style="left:768px;top:92px" width="10" height="18"><path d="M2.6 5.2 L5 2.3 L7.4 5.2Z" fill="#333"/><path d="M2.6 12.8 L5 15.7 L7.4 12.8Z" fill="#333"/></svg>
<div style="left:788px;top:61px;width:136px;height:20px;background:#a1a1a1;"></div>
<span class="t" style="top:61.5px;height:21px;line-height:21px;font-size:14px;color:#555;letter-spacing:0.00px;left:556px;width:600px;text-align:center;">自动曝光</span>
<span class="t" style="top:90.5px;height:21px;line-height:21px;font-size:14px;color:#5a5a5a;letter-spacing:0.17px;left:787px;">动态噪声系数</span>
<div style="left:873px;top:90px;width:51px;height:22px;background:#efefef;border:1px solid #dcdcdc;"></div>
<span class="t" style="top:89.0px;height:25px;line-height:25px;font-size:16.5px;color:#7c7c7c;letter-spacing:-0.28px;left:876px;">0.80</span>
<div style="left:910px;top:91px;width:13px;height:20px;background:#f3f3f3;border-left:1px solid #e2e2e2"></div>
<svg style="left:912px;top:92px" width="10" height="18"><path d="M2.8 5.1 L5 2.4 L7.2 5.1Z" fill="#333"/><path d="M2.8 12.9 L5 15.6 L7.2 12.9Z" fill="#333"/></svg>
<span class="t" style="top:133.5px;height:21px;line-height:21px;font-size:14px;color:#111;letter-spacing:0.00px;left:0px;">简图</span>
<svg style="left:489px;top:133px" width="44" height="21"><rect x="0" y="0" width="20.5" height="20.5" fill="#dadada"/><rect x="6" y="1.5" width="13" height="13" fill="#e2e2e2" stroke="#2e2e2e" stroke-width="2"/><rect x="1.5" y="6" width="13" height="13.5" fill="#dedede" stroke="#2e2e2e" stroke-width="2"/><rect x="23" y="0" width="21" height="21" fill="#d9d9d9"/><path d="M29 5.5 L38 15 M38 5.5 L29 15" stroke="#111" stroke-width="2.2" fill="none"/></svg>
<span class="t" style="top:133.5px;height:21px;line-height:21px;font-size:14px;color:#111;letter-spacing:0.50px;left:537px;">拟合曲线</span>
<svg style="left:1258px;top:133px" width="44" height="21"><rect x="0" y="0" width="20.5" height="20.5" fill="#dadada"/><rect x="6" y="1.5" width="13" height="13" fill="#e2e2e2" stroke="#2e2e2e" stroke-width="2"/><rect x="1.5" y="6" width="13" height="13.5" fill="#dedede" stroke="#2e2e2e" stroke-width="2"/><rect x="23" y="0" width="21" height="21" fill="#d9d9d9"/><path d="M29 5.5 L38 15 M38 5.5 L29 15" stroke="#111" stroke-width="2.2" fill="none"/></svg>
<span class="t" style="top:133.5px;height:21px;line-height:21px;font-size:14px;color:#111;letter-spacing:0.00px;left:1308px;">自动测量</span>
<svg style="left:1687px;top:133px" width="44" height="21"><rect x="0" y="0" width="20.5" height="20.5" fill="#dadada"/><rect x="6" y="1.5" width="13" height="13" fill="#e2e2e2" stroke="#2e2e2e" stroke-width="2"/><rect x="1.5" y="6" width="13" height="13.5" fill="#dedede" stroke="#2e2e2e" stroke-width="2"/><rect x="23" y="0" width="21" height="21" fill="#d9d9d9"/><path d="M29 5.5 L38 15 M38 5.5 L29 15" stroke="#111" stroke-width="2.2" fill="none"/></svg>
<span class="t" style="top:4.0px;height:22px;line-height:22px;font-size:15px;color:#222;letter-spacing:-0.01px;left:1575px;">语言</span>
<div style="left:1595px;top:0px;width:136px;height:22px;background:#1b1b1b;"></div>
<div style="left:1713px;top:5px;width:12px;height:12px;background:#242424;"></div>
<svg style="left:1612px;top:2px" width="10" height="11"><path d="M5 0.3 L9.3 1.8 V5.5 C9.3 8 7.4 9.8 5 10.7 C2.6 9.8 0.7 8 0.7 5.5 V1.8 Z" fill="#d8d8d8"/><rect x="4.3" y="2.8" width="1.4" height="3.6" fill="#222"/><rect x="4.3" y="7.2" width="1.4" height="1.3" fill="#222"/></svg>
<span class="t" style="top:-0.5px;height:17px;line-height:17px;font-size:11.5px;color:#f2f2f2;letter-spacing:0.00px;left:1626px;">远程控制提醒</span>
<div style="left:1547px;top:21px;width:167px;height:28px;background:#1b1b1b;"></div>
<svg style="left:1562px;top:29px" width="10" height="11"><path d="M5 0.3 L9.3 1.8 V5.5 C9.3 8 7.4 9.8 5 10.7 C2.6 9.8 0.7 8 0.7 5.5 V1.8 Z" fill="#d8d8d8"/><rect x="4.3" y="2.8" width="1.4" height="3.6" fill="#222"/><rect x="4.3" y="7.2" width="1.4" height="1.3" fill="#222"/></svg>
<span class="t" style="top:26.0px;height:16px;line-height:16px;font-size:11px;color:#e6e6e6;letter-spacing:-0.17px;left:1575px;">远程控制提醒</span>
<div style="left:1682px;top:29px;width:12px;height:12px;background:#e0325c;border-radius:6px"></div>
<span class="t" style="top:29.0px;height:12px;line-height:12px;font-size:8px;color:#fff;font-weight:700;left:1388px;width:600px;text-align:center;">!</span>
<div style="left:1306px;top:155px;width:425px;height:729px;background:#ededed;border-left:2px solid #666"></div>
<div style="left:1725px;top:155px;width:6px;height:729px;background:#f3f3f3;"></div>
<span class="t" style="top:161.5px;height:17px;line-height:17px;font-size:11.5px;color:#111;font-weight:700;letter-spacing:0.00px;left:1315px;">测量状态</span>
<div style="left:1315px;top:177px;width:409px;height:72px;background:#fefefe;border:1px solid #9a9a9a;border-top-color:#868686;border-left-color:#868686;overflow:hidden"></div>
<div style="left:1316px;top:178px;width:391px;height:20px;overflow:hidden"><span class="t" style="left:3px;top:-9px;font-size:15px;line-height:20px;color:#222;letter-spacing:0.6px">OK</span></div>
<span class="t" style="top:206.5px;height:21px;line-height:21px;font-size:14.3px;color:#111;letter-spacing:-0.05px;left:1319px;">调整曝光</span>
<div style="left:1708px;top:178px;width:15px;height:70px;background:#f6f6f6;"></div>
<div style="left:1708px;top:178px;width:15px;height:15px;background:#efefef;border-top:1px solid #fff;border-left:1px solid #fff;border-right:2px solid #6e6e6e;border-bottom:2px solid #6e6e6e"></div>
<div style="left:1708px;top:216px;width:15px;height:17px;background:#efefef;border-top:1px solid #fff;border-left:1px solid #fff;border-right:2px solid #6e6e6e;border-bottom:2px solid #6e6e6e"></div>
<div style="left:1708px;top:233px;width:15px;height:15px;background:#efefef;border-top:1px solid #fff;border-left:1px solid #fff;border-right:2px solid #6e6e6e;border-bottom:2px solid #6e6e6e"></div>
<svg style="left:1711px;top:182px" width="8" height="6"><path d="M0.5 5 L4 1 L7.5 5Z" fill="#111"/></svg>
<svg style="left:1711px;top:238px" width="8" height="6"><path d="M0.5 1 L4 5 L7.5 1Z" fill="#111"/></svg>
<span class="t" style="top:252.5px;height:17px;line-height:17px;font-size:11.5px;color:#111;font-weight:700;letter-spacing:0.00px;left:1315px;">电机状态</span>
<div style="left:1315px;top:269px;width:409px;height:72px;background:#fefefe;border:1px solid #9a9a9a;border-top-color:#868686;border-left-color:#868686"></div>
<div style="left:1315px;top:352px;width:410px;height:103px;background:#eaeaea;border:1px solid #d9d9d9;"></div>
<div style="left:1321px;top:344px;width:63px;height:15px;background:#ededed;"></div>
<span class="t" style="top:341.0px;height:22px;line-height:22px;font-size:14.5px;color:#111;letter-spacing:0.00px;left:1323px;">编辑参数</span>
<div style="left:1324px;top:370px;width:134px;height:22px;background:#cbcbcb;border:1px solid #b2b2b2;"></div>
<span class="t" style="top:370.5px;height:22px;line-height:22px;font-size:14.5px;color:#111;letter-spacing:-0.10px;left:1091px;width:600px;text-align:center;text-indent:-0.10px;">生成测量点</span>
<div style="left:1324px;top:426px;width:134px;height:22px;background:#bcd7ee;border:1px solid #2a82d2;box-shadow:inset 0 0 0 1px #7db5e6"></div>
<span class="t" style="top:426.5px;height:22px;line-height:22px;font-size:14.5px;color:#111;letter-spacing:-0.25px;left:1091px;width:600px;text-align:center;text-indent:-0.25px;">自动测量</span>
<span class="t" style="top:370.5px;height:22px;line-height:22px;font-size:14.4px;color:#111;letter-spacing:-0.02px;left:1464.5px;">精测范围比瑞利长度的倍率</span>
<span class="t" style="top:398.5px;height:22px;line-height:22px;font-size:14.4px;color:#111;letter-spacing:0.05px;left:1464.5px;">精测范围以前的步长</span>
<span class="t" style="top:426.5px;height:22px;line-height:22px;font-size:14.4px;color:#111;letter-spacing:0.05px;left:1464.5px;">精测范围以后的步长</span>
<div style="left:1643px;top:370px;width:73px;height:22px;background:#fefefe;border:1px solid #8c8c8c;"></div>
<span class="t" style="top:369.0px;height:25px;line-height:25px;font-size:16.5px;color:#1a1a1a;letter-spacing:-0.53px;left:1647px;">1.00</span>
<div style="left:1643px;top:398px;width:73px;height:22px;background:#fefefe;border:1px solid #8c8c8c;"></div>
<span class="t" style="top:397.0px;height:25px;line-height:25px;font-size:16.5px;color:#1a1a1a;letter-spacing:-0.31px;left:1647px;">5.00 mm</span>
<div style="left:1643px;top:426px;width:73px;height:22px;background:#fefefe;border:1px solid #8c8c8c;"></div>
<span class="t" style="top:425.0px;height:25px;line-height:25px;font-size:16.5px;color:#1a1a1a;letter-spacing:-0.31px;left:1647px;">5.00 mm</span>
<div style="left:1709px;top:415px;width:22px;height:46px;background:#303030;"></div>
<svg style="left:1713px;top:432px" width="8" height="12"><path d="M6 1.5 L2 6 L6 10.5" stroke="#eee" stroke-width="1.3" fill="none"/></svg>
<span class="t" style="top:459.0px;height:22px;line-height:22px;font-size:14.4px;color:#111;letter-spacing:0.11px;left:1315px;">估算的瑞利长度：</span>
<div style="left:1430px;top:459px;width:294px;height:21px;background:#fefefe;border:1px solid #8c8c8c;"></div>
<span class="t" style="top:457.5px;height:25px;line-height:25px;font-size:16.5px;color:#1a1a1a;letter-spacing:-0.24px;left:1434px;-webkit-text-stroke:0.3px #1a1a1a;">4347.00mm</span>
<span class="t" style="top:480.5px;height:22px;line-height:22px;font-size:14.4px;color:#111;letter-spacing:-0.39px;left:1315px;">精测范围：</span>
<span class="t" style="top:479.5px;height:24px;line-height:24px;font-size:16px;color:#1a1a1a;letter-spacing:0.15px;left:1392px;-webkit-text-stroke:0.3px #1a1a1a;">116.84~136.84</span>
<div style="left:1315px;top:500px;width:410px;height:379px;background:#fefefe;border:1px solid #9c9c9c;border-right-color:#888;border-bottom-color:#888"></div>
<div style="left:1342px;top:501px;width:1px;height:376px;background:#e4e4e4;"></div>
<div style="left:1342px;top:526px;width:366px;height:1px;background:#e0e0e0;"></div>
<span class="t" style="top:501.4px;height:25px;line-height:25px;font-size:16.5px;color:#1a1a1a;letter-spacing:-0.19px;left:1318.5px;-webkit-text-stroke:0.25px #1a1a1a;">1</span>
<span class="t" style="top:501.4px;height:25px;line-height:25px;font-size:16.5px;color:#1a1a1a;letter-spacing:-0.28px;left:1345.5px;-webkit-text-stroke:0.25px #1a1a1a;">1.84</span>
<div style="left:1342px;top:553px;width:366px;height:1px;background:#e0e0e0;"></div>
<span class="t" style="top:528.5px;height:25px;line-height:25px;font-size:16.5px;color:#1a1a1a;letter-spacing:-0.19px;left:1318.5px;-webkit-text-stroke:0.25px #1a1a1a;">2</span>
<span class="t" style="top:528.5px;height:25px;line-height:25px;font-size:16.5px;color:#1a1a1a;letter-spacing:-0.28px;left:1345.5px;-webkit-text-stroke:0.25px #1a1a1a;">6.84</span>
<div style="left:1342px;top:580px;width:366px;height:1px;background:#e0e0e0;"></div>
<span class="t" style="top:555.6px;height:25px;line-height:25px;font-size:16.5px;color:#1a1a1a;letter-spacing:-0.19px;left:1318.5px;-webkit-text-stroke:0.25px #1a1a1a;">3</span>
<span class="t" style="top:555.6px;height:25px;line-height:25px;font-size:16.5px;color:#1a1a1a;letter-spacing:-0.02px;left:1345.5px;-webkit-text-stroke:0.25px #1a1a1a;">11.84</span>
<div style="left:1342px;top:607px;width:366px;height:1px;background:#e0e0e0;"></div>
<span class="t" style="top:582.7px;height:25px;line-height:25px;font-size:16.5px;color:#1a1a1a;letter-spacing:-0.19px;left:1318.5px;-webkit-text-stroke:0.25px #1a1a1a;">4</span>
<span class="t" style="top:582.7px;height:25px;line-height:25px;font-size:16.5px;color:#1a1a1a;letter-spacing:-0.26px;left:1345.5px;-webkit-text-stroke:0.25px #1a1a1a;">16.84</span>
<div style="left:1342px;top:634px;width:366px;height:1px;background:#e0e0e0;"></div>
<span class="t" style="top:609.8px;height:25px;line-height:25px;font-size:16.5px;color:#1a1a1a;letter-spacing:-0.19px;left:1318.5px;-webkit-text-stroke:0.25px #1a1a1a;">5</span>
<span class="t" style="top:609.8px;height:25px;line-height:25px;font-size:16.5px;color:#1a1a1a;letter-spacing:-0.26px;left:1345.5px;-webkit-text-stroke:0.25px #1a1a1a;">21.84</span>
<div style="left:1342px;top:662px;width:366px;height:1px;background:#e0e0e0;"></div>
<span class="t" style="top:636.9px;height:25px;line-height:25px;font-size:16.5px;color:#1a1a1a;letter-spacing:-0.19px;left:1318.5px;-webkit-text-stroke:0.25px #1a1a1a;">6</span>
<span class="t" style="top:636.9px;height:25px;line-height:25px;font-size:16.5px;color:#1a1a1a;letter-spacing:-0.26px;left:1345.5px;-webkit-text-stroke:0.25px #1a1a1a;">26.84</span>
<div style="left:1342px;top:689px;width:366px;height:1px;background:#e0e0e0;"></div>
<span class="t" style="top:664.0px;height:25px;line-height:25px;font-size:16.5px;color:#1a1a1a;letter-spacing:-0.19px;left:1318.5px;-webkit-text-stroke:0.25px #1a1a1a;">7</span>
<span class="t" style="top:664.0px;height:25px;line-height:25px;font-size:16.5px;color:#1a1a1a;letter-spacing:-0.26px;left:1345.5px;-webkit-text-stroke:0.25px #1a1a1a;">31.84</span>
<div style="left:1342px;top:716px;width:366px;height:1px;background:#e0e0e0;"></div>
<span class="t" style="top:691.1px;height:25px;line-height:25px;font-size:16.5px;color:#1a1a1a;letter-spacing:-0.19px;left:1318.5px;-webkit-text-stroke:0.25px #1a1a1a;">8</span>
<span class="t" style="top:691.1px;height:25px;line-height:25px;font-size:16.5px;color:#1a1a1a;letter-spacing:-0.26px;left:1345.5px;-webkit-text-stroke:0.25px #1a1a1a;">36.84</span>
<div style="left:1342px;top:743px;width:366px;height:1px;background:#e0e0e0;"></div>
<span class="t" style="top:718.2px;height:25px;line-height:25px;font-size:16.5px;color:#1a1a1a;letter-spacing:-0.19px;left:1318.5px;-webkit-text-stroke:0.25px #1a1a1a;">9</span>
<span class="t" style="top:718.2px;height:25px;line-height:25px;font-size:16.5px;color:#1a1a1a;letter-spacing:-0.26px;left:1345.5px;-webkit-text-stroke:0.25px #1a1a1a;">41.84</span>
<div style="left:1342px;top:770px;width:366px;height:1px;background:#e0e0e0;"></div>
<span class="t" style="top:745.3px;height:25px;line-height:25px;font-size:16.5px;color:#1a1a1a;letter-spacing:-0.18px;left:1318.5px;-webkit-text-stroke:0.25px #1a1a1a;">10</span>
<span class="t" style="top:745.3px;height:25px;line-height:25px;font-size:16.5px;color:#1a1a1a;letter-spacing:-0.26px;left:1345.5px;-webkit-text-stroke:0.25px #1a1a1a;">46.84</span>
<div style="left:1342px;top:797px;width:366px;height:1px;background:#e0e0e0;"></div>
<span class="t" style="top:772.4px;height:25px;line-height:25px;font-size:16.5px;color:#1a1a1a;letter-spacing:0.43px;left:1318.5px;-webkit-text-stroke:0.25px #1a1a1a;">11</span>
<span class="t" style="top:772.4px;height:25px;line-height:25px;font-size:16.5px;color:#1a1a1a;letter-spacing:-0.26px;left:1345.5px;-webkit-text-stroke:0.25px #1a1a1a;">51.84</span>
<div style="left:1342px;top:824px;width:366px;height:1px;background:#e0e0e0;"></div>
<span class="t" style="top:799.5px;height:25px;line-height:25px;font-size:16.5px;color:#1a1a1a;letter-spacing:-0.18px;left:1318.5px;-webkit-text-stroke:0.25px #1a1a1a;">12</span>
<span class="t" style="top:799.5px;height:25px;line-height:25px;font-size:16.5px;color:#1a1a1a;letter-spacing:-0.26px;left:1345.5px;-webkit-text-stroke:0.25px #1a1a1a;">56.84</span>
<div style="left:1342px;top:851px;width:366px;height:1px;background:#e0e0e0;"></div>
<span class="t" style="top:826.6px;height:25px;line-height:25px;font-size:16.5px;color:#1a1a1a;letter-spacing:-0.18px;left:1318.5px;-webkit-text-stroke:0.25px #1a1a1a;">13</span>
<span class="t" style="top:826.6px;height:25px;line-height:25px;font-size:16.5px;color:#1a1a1a;letter-spacing:-0.26px;left:1345.5px;-webkit-text-stroke:0.25px #1a1a1a;">61.84</span>
<span class="t" style="top:853.7px;height:25px;line-height:25px;font-size:16.5px;color:#1a1a1a;letter-spacing:-0.18px;left:1318.5px;-webkit-text-stroke:0.25px #1a1a1a;">14</span>
<span class="t" style="top:853.7px;height:25px;line-height:25px;font-size:16.5px;color:#1a1a1a;letter-spacing:-0.26px;left:1345.5px;-webkit-text-stroke:0.25px #1a1a1a;">66.84</span>
<div style="left:1708px;top:501px;width:15px;height:376px;background:#f1f1f1;"></div>
<div style="left:1709px;top:517px;width:13px;height:66px;background:#b6b6b6;"></div>
<svg style="left:1710px;top:505px" width="11" height="8"><path d="M1.5 6 L5.5 2 L9.5 6" stroke="#444" stroke-width="1.5" fill="none"/></svg>
<svg style="left:1710px;top:866px" width="11" height="8"><path d="M1.5 2 L5.5 6 L9.5 2" stroke="#444" stroke-width="1.5" fill="none"/></svg>
</body></html>
